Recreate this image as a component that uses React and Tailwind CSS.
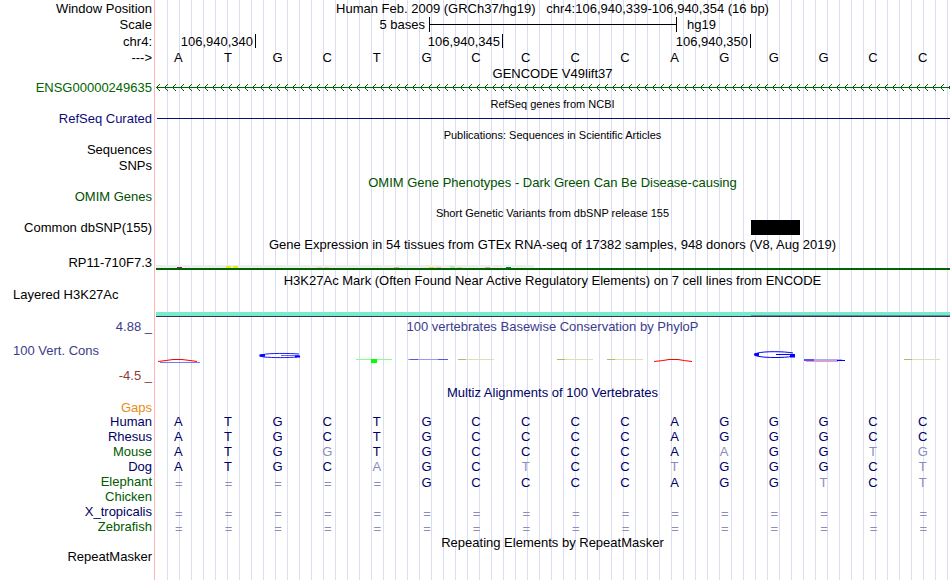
const HUMAN = 'ATGCTGCCCCAGGGCC';

const ALIGNMENTS = [
  { name: 'Human', bases: 'ATGCTGCCCCAGGGCC', color: 'text-[#000064]' },
  { name: 'Rhesus', bases: 'ATGCTGCCCCAGGGCC', color: 'text-[#000064]' },
  { name: 'Mouse', bases: 'ATGGTGCCCCAAGGTG', color: 'text-[#005a00]' },
  { name: 'Dog', bases: 'ATGCAGCTCCTGGGCT', color: 'text-[#000064]' },
  { name: 'Elephant', bases: '=====GCCCCAGGTCT', color: 'text-[#005a00]' },
  { name: 'Chicken', bases: '', color: 'text-[#005a00]' },
  { name: 'X_tropicalis', bases: '================', color: 'text-[#000064]' },
  { name: 'Zebrafish', bases: '================', color: 'text-[#005a00]' },
];

// x is in the 794 unit wide data area
const GTEX_BARS = [
  { x: 21, h: 1, fill: '#8b1c62' },
  { x: 70, h: 2, fill: '#eeee00' },
  { x: 77, h: 2, fill: '#eeee00' },
  { x: 161, h: 1, fill: '#eed5d2' },
  { x: 168, h: 1, fill: '#eed5d2' },
  { x: 238, h: 1, fill: '#cdb79e' },
  { x: 273, h: 1, fill: '#ffd700' },
  { x: 280, h: 1, fill: '#ffb6c1' },
  { x: 294, h: 2, fill: '#b4eeb4' },
  { x: 301, h: 1, fill: '#d9d9d9' },
  { x: 329, h: 1, fill: '#cdb79e' },
  { x: 350, h: 1, fill: '#008b45' },
];

const FAINT_CONS = [302, 401, 451, 748];

function Track({ label, labelClass = '', className = 'h-[15px]', children }) {
  return (
    <div className={`grid grid-cols-[156px_minmax(0,1fr)] ${className}`}>
      <div className={`flex items-center justify-end pr-1 leading-3 whitespace-nowrap ${labelClass}`}>{label}</div>
      <div className="min-w-0">{children}</div>
    </div>
  );
}

function Title({ label, labelClass, className = 'h-4', textClass = '', children }) {
  return (
    <Track label={label} labelClass={labelClass} className={className}>
      <h2 className={`flex h-full items-center justify-center pr-px leading-3 whitespace-pre ${textClass}`}>
        {children}
      </h2>
    </Track>
  );
}

function Bases({ bases, compare = false }) {
  return (
    <div className="-ml-0.5 mr-0.5 grid h-[15px] grid-cols-16 items-center text-center leading-[15px]">
      {[...bases].map((b, i) => (
        <span
          key={i}
          className={`${compare && b !== HUMAN[i] ? 'text-[#8c8cb9]' : ''} ${b === '=' ? 'pt-0.5' : 'pr-px'}`}
        >
          {b}
        </span>
      ))}
    </div>
  );
}

function Ruler() {
  return (
    <div className="grid h-full grid-cols-[100px_247fr_248fr_199fr] pt-px">
      {['106,940,340', '106,940,345', '106,940,350'].map(pos => (
        <div key={pos} className="flex h-3.5 justify-end border-r border-black pr-0.5 leading-4">
          {pos}
        </div>
      ))}
    </div>
  );
}

function ScaleBar() {
  return (
    <div className="grid h-full grid-cols-[273fr_248fr_273fr] items-start">
      <span className="pr-1 text-right">5 bases</span>
      <div className="flex h-[15px] items-center border-x border-black">
        <div className="h-px w-full bg-black" />
      </div>
      <span className="pl-2.5">hg19</span>
    </div>
  );
}

function GeneArrows() {
  return (
    <svg className="block h-[13px] w-full" aria-hidden="true">
      <defs>
        <pattern id="strand" width="8" height="13" patternUnits="userSpaceOnUse">
          <g fill="#006400" shapeRendering="crispEdges">
            <rect x="1" y="4" width="1" height="3" />
            <rect x="2" y="3" width="1" height="1" />
            <rect x="2" y="7" width="1" height="1" />
            <rect x="3" y="2" width="1" height="1" />
            <rect x="3" y="8" width="1" height="1" />
          </g>
        </pattern>
      </defs>
      <rect width="100%" height="13" fill="url(#strand)" />
      <rect y="5" width="100%" height="1" fill="#006400" />
    </svg>
  );
}

function GtexChart() {
  return (
    <svg
      className="block h-[5px] w-full"
      viewBox="0 0 794 5"
      preserveAspectRatio="none"
      shapeRendering="crispEdges"
      aria-hidden="true"
    >
      <rect width="378" height="3" fill="#eeeeee" />
      {GTEX_BARS.map(b => (
        <rect key={b.x} x={b.x} y={3 - b.h} width="5" height={b.h} fill={b.fill} />
      ))}
      <rect y="3" width="794" height="2" fill="#006400" />
    </svg>
  );
}

function Conservation() {
  return (
    <svg className="block h-[47px] w-full" viewBox="0 2 794 47" preserveAspectRatio="none" aria-hidden="true">
      <path d="M2 26.5 L10 25.5 L17 24.5 H26 L34 25.5 L41 26.5" fill="none" stroke="#ff0000" strokeWidth="1.2" />
      <rect x="4" y="27" width="40" height="1" fill="#7777ff" />

      <g fill="none" stroke="#0000ff">
        <path d="M143 19 C134 18.2 112 18.1 107 19.6 C103 20.4 103 21.3 108 22 C116 22.8 132 22.8 141 22" strokeWidth="0.9" />
        <path d="M103.500 20.500 H109" strokeWidth="2.4" />
        <path d="M125 20.500 H143" strokeWidth="0.6" />
        <path d="M139 21.500 H144" strokeWidth="2" />
        <path d="M637 18 C628 16.300 608 16.200 602 18 C597 19.200 597 20.400 603 21.400 C610 22.900 628 22.900 636 21.400" />
        <path d="M598.500 19.500 H603" strokeWidth="2.800" />
        <path d="M620 19.500 H639" strokeWidth="1" />
        <path d="M634 21 H639" strokeWidth="3" />
      </g>

      <g shapeRendering="crispEdges">
        <rect x="200" y="24" width="36" height="1" fill="#88ff88" />
        <rect x="215" y="24" width="6" height="4" fill="#00ff00" />
        <rect x="252" y="24" width="40" height="1" fill="#9999ee" />
        <rect x="254" y="24" width="8" height="1" fill="#5555dd" />
        <rect x="282" y="24" width="10" height="1" fill="#5555ee" />
        {FAINT_CONS.map(x => (
          <g key={x}>
            <rect x={x} y="24" width="36" height="1" fill="#dedeae" />
            <rect x={x} y="24" width="8" height="1" fill="#b9b964" />
          </g>
        ))}
      </g>

      <path d="M498 26.500 L507 25.500 L513 24.500 H522 L528 25.500 L536 26.500" fill="none" stroke="#ff0000" strokeWidth="1.2" />
      <rect x="648" y="24" width="38" height="2" fill="#aaaaff" />
      <rect x="648" y="24" width="10" height="2" fill="#5555ff" />
      <rect x="681" y="25" width="8" height="1" fill="#0000ff" />
      <rect x="650" y="26" width="32" height="1" fill="#ff9999" />
    </svg>
  );
}

export default function App() {
  return (
    <main className="min-h-screen overflow-hidden bg-white bg-[linear-gradient(to_right,transparent_154px,#ffb4b4_154px,#ffb4b4_155px,transparent_155px),repeating-linear-gradient(to_right,transparent_0,transparent_11px,#dcdcf5_11px,#dcdcf5_12px)] bg-[position:0_0,156px_0] bg-no-repeat font-['Liberation_Sans',Arial,sans-serif] text-[13px] leading-4 text-black">
      <Title label="Window Position" className="h-[17px]">
        {'Human Feb. 2009 (GRCh37/hg19)   chr4:106,940,339-106,940,354 (16 bp)'}
      </Title>
      <Track label="Scale" className="h-4">
        <ScaleBar />
      </Track>
      <Track label="chr4:" className="h-[17px]">
        <Ruler />
      </Track>
      <Track label="--->" className="h-4">
        <Bases bases={HUMAN} />
      </Track>

      <Title>GENCODE V49lift37</Title>
      <Track label="ENSG00000249635" labelClass="pb-0.5 text-[#006400]" className="h-3.5">
        <GeneArrows />
      </Track>

      <Title textClass="text-[11px]">RefSeq genes from NCBI</Title>
      <Track label="RefSeq Curated" labelClass="pb-0.5 text-[#0c0c78]">
        <div className="ml-px pt-1.5">
          <div className="h-px bg-[#0c0c78]" />
        </div>
      </Track>

      <Title textClass="text-[11px]">Publications: Sequences in Scientific Articles</Title>
      <Track label="Sequences" labelClass="pb-0.5" />
      <Track label="SNPs" className="h-4" />

      <Title textClass="pt-0.5 text-[#005000]">OMIM Gene Phenotypes - Dark Green Can Be Disease-causing</Title>
      <Track label="OMIM Genes" labelClass="pb-0.5 text-[#005000]" />

      <Title textClass="text-[11px]" className="h-[15px]">
        Short Genetic Variants from dbSNP release 155
      </Title>
      <Track label="Common dbSNP(155)">
        <div className="grid h-full grid-cols-[595fr_49fr_150fr]">
          <div className="col-start-2 bg-black" />
        </div>
      </Track>

      <Title className="h-5">
        Gene Expression in 54 tissues from GTEx RNA-seq of 17382 samples, 948 donors (V8, Aug 2019)
      </Title>
      <Track label="RP11-710F7.3" labelClass="pb-0.5" className="h-[17px]">
        <div className="flex h-full items-end pb-0.5">
          <GtexChart />
        </div>
      </Track>

      <Title className="h-[17px]">
        H3K27Ac Mark (Often Found Near Active Regulatory Elements) on 7 cell lines from ENCODE
      </Title>
      <Track label="Layered H3K27Ac" labelClass="items-start! justify-start! pl-[13px]" className="h-7">
        <div className="flex h-full flex-col justify-end">
          <div className="grid h-1 grid-cols-[595fr_199fr] items-end bg-[#78ebcd]">
            <div className="col-start-2 h-px bg-[#5a9696]" />
          </div>
          <div className="h-px bg-[#32325a]" />
        </div>
      </Track>

      <Title
        label="4.88 _"
        labelClass="text-[#3c3c8c]"
        className="h-5"
        textClass="text-[#3c3c8c]"
      >
        100 vertebrates Basewise Conservation by PhyloP
      </Title>
      <Track
        label={
          <>
            <span className="pt-2 pl-[13px] text-[#3c3c8c]">100 Vert. Cons</span>
            <span className="self-end pb-0.5 text-[#8c3c3c]">-4.5 _</span>
          </>
        }
        labelClass="flex-col items-start! justify-between!"
        className="h-[47px]"
      >
        <Conservation />
      </Track>

      <Title className="h-[17px]" textClass="text-[#000064]">
        Multiz Alignments of 100 Vertebrates
      </Title>
      <Track label="Gaps" labelClass="text-[#e68c14]" className="h-[13px]" />
      {ALIGNMENTS.map(({ name, bases, color }) => (
        <Track key={name} label={name} labelClass={color}>
          <div className="text-[#000064]">
            <Bases bases={bases} compare />
          </div>
        </Track>
      ))}

      <Title className="h-[17px]">Repeating Elements by RepeatMasker</Title>
      <Track label="RepeatMasker" labelClass="pb-0.5" className="h-3.5" />
    </main>
  );
}
